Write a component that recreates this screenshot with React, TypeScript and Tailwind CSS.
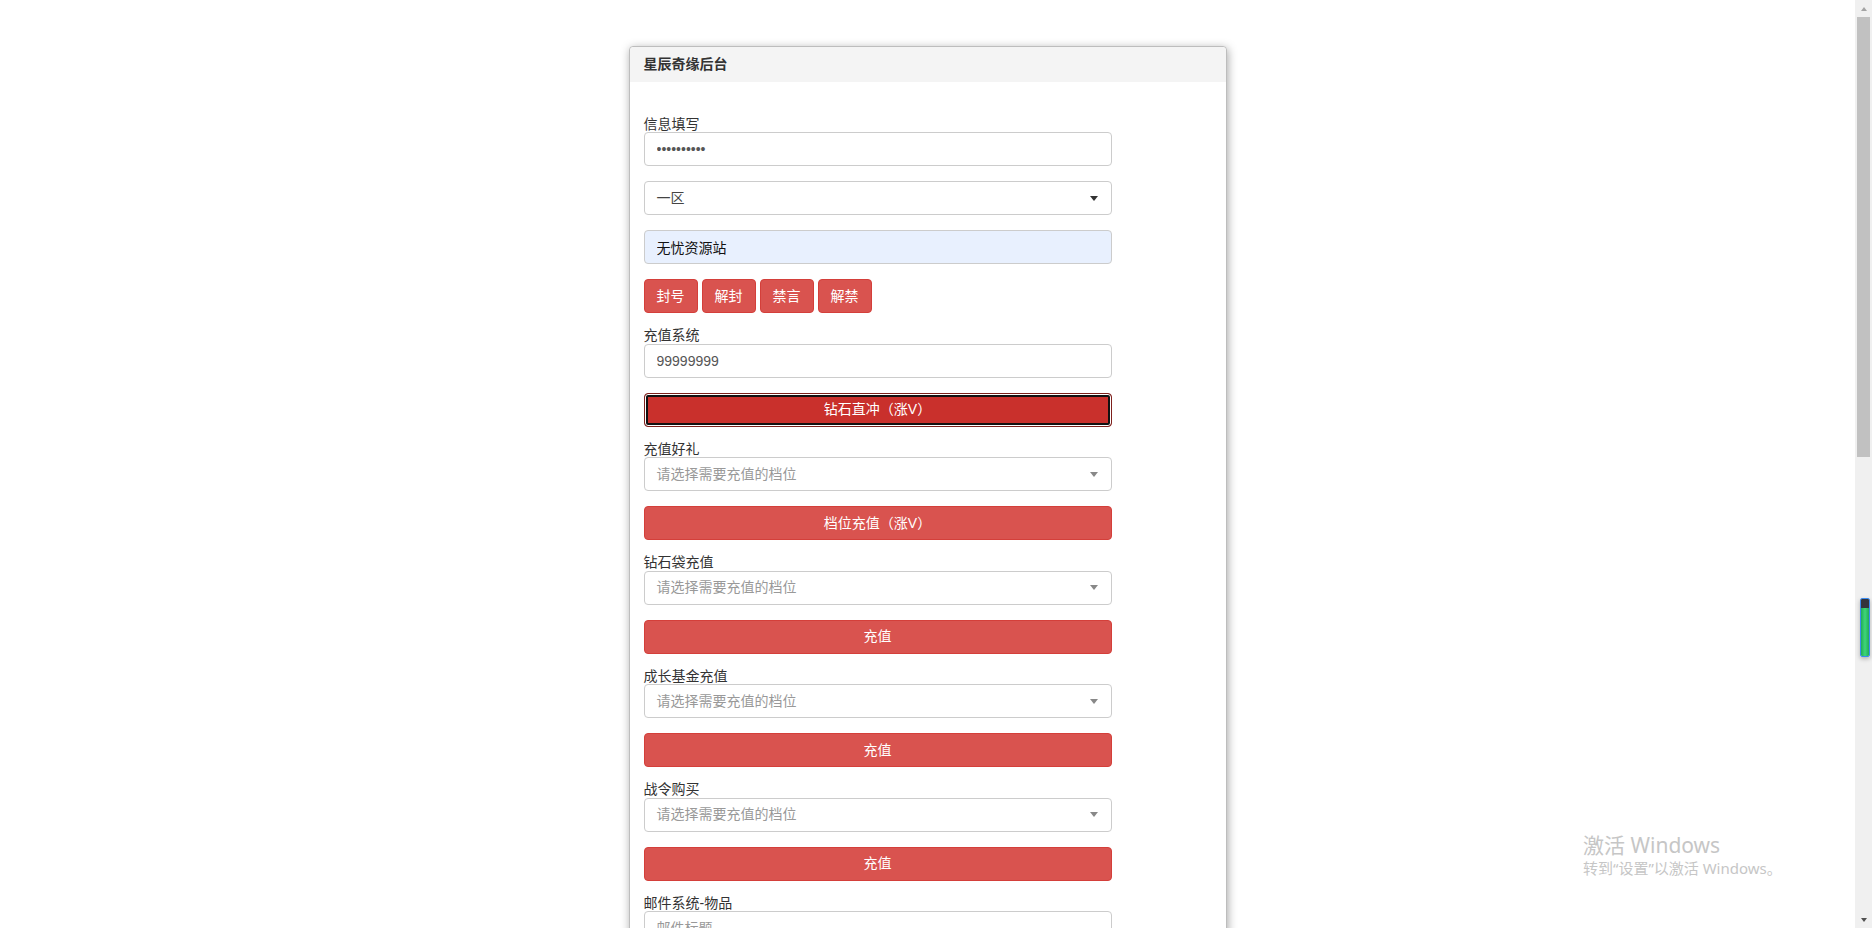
import type { ReactNode } from "react";

const FONT = "font-['Liberation_Sans','Noto_Sans_CJK_SC',sans-serif]";

function FieldLabel({ children }: { children: ReactNode }) {
  return <label className="block h-[15.5px] text-[14px] leading-[15.5px] text-[#333]">{children}</label>;
}

function TextInput({ value, placeholder, type = "text", filled }: { value?: string; placeholder?: string; type?: string; filled?: boolean }) {
  return (
    <input
      type={type}
      readOnly
      value={value ?? ""}
      placeholder={placeholder}
      className={`mb-[15px] block h-[34px] w-[468px] rounded border border-[#ccc] px-3 text-[14px] outline-none placeholder:text-[#999] ${
        filled ? "bg-[#e8f0fe] text-[#111]" : "bg-white text-[#555]"
      }`}
    />
  );
}

function FakeSelect({ text, muted }: { text: string; muted?: boolean }) {
  return (
    <div className="mb-[15px] flex h-[34px] w-[468px] items-center justify-between rounded border border-[#ccc] bg-white pl-3 pr-[13px] text-[14px]">
      <span className={muted ? "text-[#999]" : "text-[#444]"}>{text}</span>
      <span
        className={`h-0 w-0 border-x-4 border-t-[5px] border-x-transparent ${muted ? "border-t-[#888]" : "border-t-[#333]"}`}
      />
    </div>
  );
}

function RedButton({ children, focused }: { children: ReactNode; focused?: boolean }) {
  return (
    <button
      className={`mb-[15px] block h-[34px] w-[468px] rounded border text-[14px] text-white ${
        focused
          ? "border-[#7e211d] bg-[#c9302c] shadow-[inset_0_0_0_1px_#fff,inset_0_0_0_3px_#111]"
          : "border-[#d43f3a] bg-[#d9534f]"
      }`}
    >
      {children}
    </button>
  );
}

const tiers = ["充值好礼", "钻石袋充值", "成长基金充值", "战令购买"];

function Scrollbar() {
  return (
    <div className="relative flex h-full w-[17px] shrink-0 flex-col bg-[#f0f0f0]">
      <div className="flex h-[17px] items-center justify-center">
        <span className="h-0 w-0 border-x-[3.5px] border-b-[4px] border-x-transparent border-b-[#a3a3a3]" />
      </div>
      <div className="mx-[2px] h-[440px] bg-[#c1c1c1]" />
      <div className="flex-1" />
      <div className="flex h-[17px] items-center justify-center">
        <span className="h-0 w-0 border-x-[3.5px] border-t-[4px] border-x-transparent border-t-[#505050]" />
      </div>
      {/* floating widget that sits over the scrollbar */}
      <div className="absolute left-[5px] top-[598px] flex h-[59px] w-[10px] flex-col overflow-hidden rounded-[2px] border border-[#3b8cf0] shadow-[0_2px_4px_rgba(0,0,0,0.25)]">
        <div className="h-[9px] bg-[#34343c]" />
        <div className="flex-1 bg-gradient-to-r from-[#1fae55] via-[#3fd57a] to-[#1fae55]" />
      </div>
    </div>
  );
}

export default function App() {
  return (
    <div className={`flex h-screen w-full overflow-hidden bg-white ${FONT}`}>
      <main className="relative flex-1 overflow-hidden">
        <div className="mx-auto mt-[46px] w-[598px] rounded border border-[#bdbdbd] bg-white shadow-[1px_2px_10px_rgba(0,0,0,0.35)]">
          <div className="flex h-[35px] items-center rounded-t bg-[#f4f4f4] px-[14px] text-[14px] font-bold text-[#333]">
            星辰奇缘后台
          </div>
          <div className="px-[14px] pb-8 pt-[34.5px]">
            <FieldLabel>信息填写</FieldLabel>
            <TextInput type="password" value="1234567890" />
            <FakeSelect text="一区" />
            <TextInput value="无忧资源站" filled />
            <div className="mb-[15px] flex gap-[4px]">
              {["封号", "解封", "禁言", "解禁"].map((t) => (
                <button
                  key={t}
                  className="h-[34px] w-[54px] rounded border border-[#d43f3a] bg-[#d9534f] text-[14px] text-white"
                >
                  {t}
                </button>
              ))}
            </div>

            <FieldLabel>充值系统</FieldLabel>
            <TextInput value="99999999" />
            <RedButton focused>钻石直冲（涨V）</RedButton>

            {tiers.map((t, i) => (
              <div key={t}>
                <FieldLabel>{t}</FieldLabel>
                <FakeSelect text="请选择需要充值的档位" muted />
                <RedButton>{i === 0 ? "档位充值（涨V）" : "充值"}</RedButton>
              </div>
            ))}

            <FieldLabel>邮件系统-物品</FieldLabel>
            <TextInput placeholder="邮件标题" />
            <TextInput placeholder="邮件内容" />
            <FakeSelect text="请选择需要发送的物品" muted />
            <TextInput placeholder="物品数量" />
            <RedButton>发送邮件</RedButton>
          </div>
        </div>

        <div className="absolute left-[1583px] top-[833px] flex flex-col font-['Segoe_UI','Noto_Sans','Noto_Sans_CJK_SC',sans-serif] text-[#c6c6c6]">
          <span className="text-[21px] leading-[25px]">激活 Windows</span>
          <span className="text-[15px] leading-[20px]">转到“设置”以激活 Windows。</span>
        </div>
      </main>
      <Scrollbar />
    </div>
  );
}
